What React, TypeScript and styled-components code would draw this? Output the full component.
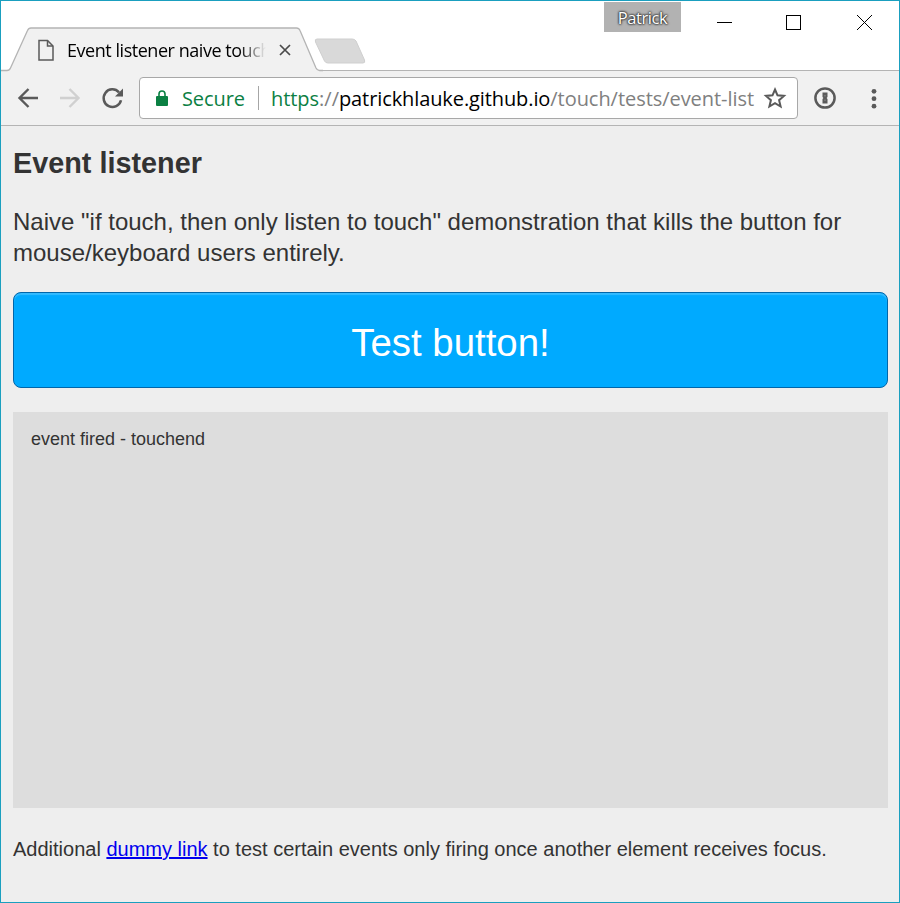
import React from "react";
import styled, { createGlobalStyle } from "styled-components";

const Global = createGlobalStyle`
  *, *::before, *::after { box-sizing: border-box; }
  body { margin: 0; background: #fff; }
`;

const UI_FONT = `"Open Sans", "Noto Sans", sans-serif`;

const Window = styled.div`
  width: 900px;
  height: 903px;
  display: flex;
  flex-direction: column;
  border: 1px solid #1a9fbf;
  background: #eeeeee;
  overflow: hidden;
`;

const TitleBar = styled.header`
  height: 70px;
  flex: none;
  display: flex;
  align-items: flex-start;
  background: #fff;
  border-bottom: 1px solid #b4b4b4;
  font-family: ${UI_FONT};
`;

const Tab = styled.div`
  position: relative;
  width: 313px;
  height: 44px;
  margin-top: 26px;
  padding: 0 26px 0 36px;
  display: flex;
  align-items: center;
  flex: none;
`;

const TabShape = styled.svg`
  position: absolute;
  left: 0;
  top: 0;
  width: 322px;
  height: 45px;
`;

const PageIcon = styled.svg`
  position: relative;
  width: 18px;
  height: 24px;
  margin-top: 1px;
  flex: none;
`;

const TabTitle = styled.span`
  position: relative;
  width: 204px;
  margin: 1px 0 0 12px;
  flex: none;
  white-space: nowrap;
  font-size: 18px;
  line-height: 26px;
  letter-spacing: -0.46px;
  color: #000;
  mask-image: linear-gradient(to right, #000 172px, transparent 199px);
`;

const TabClose = styled.svg`
  position: relative;
  width: 14px;
  height: 14px;
  margin: 1px 0 0 7px;
  flex: none;
`;

const NewTab = styled.svg`
  width: 52px;
  height: 26px;
  margin-top: 37px;
  flex: none;
`;

const Profile = styled.div`
  width: 77px;
  height: 30px;
  margin: 1px 0 0 auto;
  background: #b2b2b2;
  color: #fff;
  font-size: 16.5px;
  line-height: 31px;
  letter-spacing: -0.45px;
  text-align: center;
  text-shadow: 0 0 2px #222, 0 0 2px #222, 0 0 3px #444;
`;

const Controls = styled.div`
  display: flex;
  width: 218px;
  height: 43px;
  padding: 0 26px 0 35px;
  align-items: center;
`;

const ControlIcon = styled.svg<{ $gap?: number }>`
  width: 17px;
  height: 17px;
  margin-right: ${(p) => p.$gap ?? 0}px;
  flex: none;
  shape-rendering: crispEdges;
`;

const Toolbar = styled.nav`
  height: 55px;
  flex: none;
  display: flex;
  align-items: center;
  padding-left: 15px;
  background: #f1f1f1;
  border-bottom: 1px solid #b4b4b4;
  font-family: ${UI_FONT};
`;

const ToolIcon = styled.svg<{ $before?: number; $after?: number }>`
  width: 24px;
  height: 24px;
  margin-left: ${(p) => p.$before ?? 0}px;
  margin-right: ${(p) => p.$after ?? 0}px;
  flex: none;
`;

const Omnibox = styled.div`
  width: 659px;
  height: 42px;
  flex: none;
  display: flex;
  align-items: center;
  padding-left: 15px;
  background: #fff;
  border: 1px solid #a8a8a8;
  border-radius: 4px;
  font-size: 20px;
  line-height: 30px;
  white-space: nowrap;
`;

const Lock = styled.svg`
  width: 14px;
  height: 18px;
  flex: none;
`;

const Secure = styled.span`
  width: 76px;
  margin: 2px 0 0 13px;
  flex: none;
  color: #0b8043;
  letter-spacing: -0.1px;
`;

const Divider = styled.span`
  width: 1px;
  height: 24px;
  flex: none;
  background: #a6a6a6;
  margin-right: 12px;
`;

const Url = styled.span`
  width: 484px;
  margin-top: 2px;
  flex: none;
`;

const UrlPart = styled.span<{ $color: string; $spacing: number }>`
  color: ${(p) => p.$color};
  letter-spacing: ${(p) => p.$spacing}px;
`;

const Star = styled.svg`
  width: 24px;
  height: 24px;
  margin-left: 8px;
  flex: none;
`;

const Page = styled.main`
  flex: 1;
  padding: 20px 11px 0 12px;
  color: #333;
  font-family: "Liberation Sans", Arial, sans-serif;
`;

const Heading = styled.h1`
  margin: 0 0 26px;
  font-size: 28.8px;
  line-height: 34px;
`;

const Intro = styled.p`
  margin: 0 0 24px;
  font-size: 24px;
  line-height: 31px;
`;

const TestButton = styled.button`
  display: block;
  width: 100%;
  height: 96px;
  margin: 0;
  padding: 6px 0 0;
  border: 1px solid #0066aa;
  border-radius: 8px;
  background: #00aaff;
  box-shadow: inset 0 2px 1px rgba(255, 255, 255, 0.2);
  color: #fff;
  font-family: inherit;
  font-size: 38.4px;
  line-height: 44px;
`;

const EventLog = styled.div`
  height: 396px;
  margin-top: 24px;
  padding: 16px 18px;
  background: #dddddd;
  font-size: 18px;
  line-height: 22px;
`;

const Note = styled.p`
  margin: 29px 0 0;
  font-size: 20px;
  line-height: 24px;
`;

const Link = styled.a`
  color: #0000ee;
  text-decoration: underline;
`;

export default function App() {
  return (
    <>
      <Global />
      <Window>
        <TitleBar>
          <Tab>
            <TabShape viewBox="0 0 322 45">
              <path
                d="M0 43.500H6Q8.500 43.500 9.500 41L26.500 3.500Q27.500 1 30 1H295.500Q298 1 299 3.500L315 41Q316.200 43.500 318.500 43.500H322V45H0Z"
                fill="#f1f1f1"
              />
              <path
                d="M0 43.500H6Q8.500 43.500 9.500 41L26.500 3.500Q27.500 1 30 1H295.500Q298 1 299 3.500L315 41Q316.200 43.500 318.500 43.500H322"
                fill="none"
                stroke="#b4b4b4"
                strokeWidth="1.300"
              />
            </TabShape>
            <PageIcon viewBox="0 0 18 24" fill="none" stroke="#5a5a5a" strokeWidth="1.500">
              <path d="M2 2.500H10.500L16 8V22H2Z" />
              <path d="M10.500 2.500V8H16" />
            </PageIcon>
            <TabTitle>Event listener naive touch</TabTitle>
            <TabClose viewBox="0 0 14 14" stroke="#4a4a4a" strokeWidth="1.700">
              <path d="M2 2L12 12M12 2L2 12" />
            </TabClose>
          </Tab>
          <NewTab viewBox="0 0 52 26">
            <path
              d="M3 1H38Q41 1 42 3L50.500 22Q51.500 25 49 25H14Q11.500 25 10.500 23L1.500 4Q0.500 1 3 1Z"
              fill="#d9d9d9"
              stroke="#cfcfcf"
            />
          </NewTab>
          <Profile>Patrick</Profile>
          <Controls>
            <ControlIcon $gap={52} viewBox="0 0 17 17">
              <path d="M1 8.500H16" stroke="#000" />
            </ControlIcon>
            <ControlIcon $gap={54} viewBox="0 0 17 17">
              <rect x="1.500" y="1.500" width="14" height="14" fill="none" stroke="#000" />
            </ControlIcon>
            <ControlIcon viewBox="0 0 17 17">
              <path d="M1 1L16 16M16 1L1 16" stroke="#000" />
            </ControlIcon>
          </Controls>
        </TitleBar>

        <Toolbar>
          <ToolIcon $after={18} viewBox="0 0 24 24" fill="none" stroke="#5a5a5a" strokeWidth="2.400">
            <path d="M22 12H4M12.500 3L3.500 12L12.500 21" />
          </ToolIcon>
          <ToolIcon $after={18} viewBox="0 0 24 24" fill="none" stroke="#d0d0d0" strokeWidth="2.400">
            <path d="M2 12H20M11.500 3L20.500 12L11.500 21" />
          </ToolIcon>
          <ToolIcon $after={15} viewBox="0 0 24 24" fill="none" stroke="#5a5a5a" strokeWidth="2.500">
            <path d="M21 14.200A8.800 8.800 0 1 1 19 6.300" />
            <path d="M23 2.500V10.500H15Z" fill="#5a5a5a" stroke="none" />
          </ToolIcon>
          <Omnibox>
            <Lock viewBox="0 0 14 18">
              <rect x="1" y="7" width="12" height="10" rx="1" fill="#0b8043" />
              <path d="M4 8V5A3 3 0 0 1 10 5V8" fill="none" stroke="#0b8043" strokeWidth="1.600" />
            </Lock>
            <Secure>Secure</Secure>
            <Divider />
            <Url>
              <UrlPart $color="#0b8043" $spacing={-0.05}>https</UrlPart>
              <UrlPart $color="#808080" $spacing={0}>://</UrlPart>
              <UrlPart $color="#000" $spacing={-0.1}>patrickhlauke.github.io</UrlPart>
              <UrlPart $color="#808080" $spacing={-0.05}>/touch/tests/event-list</UrlPart>
            </Url>
            <Star viewBox="0 0 24 24" fill="none" stroke="#5a5a5a" strokeWidth="2">
              <path d="M12 3.500L14.500 9.300L21 9.900L16.100 14.200L17.600 20.500L12 17.100L6.400 20.500L7.900 14.200L3 9.900L9.500 9.300Z" />
            </Star>
          </Omnibox>
          <ToolIcon $before={15} $after={25} viewBox="0 0 24 24" fill="none" stroke="#5a5a5a">
            <circle cx="12" cy="12" r="9.600" strokeWidth="2.500" />
            <path
              d="M9.500 6.500H14.500V11L13.600 12L14.500 13V17.500H9.500V13L10.400 12L9.500 11Z"
              fill="#5a5a5a"
              stroke="none"
            />
            <path d="M12 9V10.500M12 13.500V15" stroke="#999" strokeWidth="0.800" />
          </ToolIcon>
          <ToolIcon viewBox="0 0 24 24" fill="#5a5a5a">
            <circle cx="12" cy="5.300" r="2.400" />
            <circle cx="12" cy="12.700" r="2.400" />
            <circle cx="12" cy="20.200" r="2.400" />
          </ToolIcon>
        </Toolbar>

        <Page>
          <Heading>Event listener</Heading>
          <Intro>
            Naive "if touch, then only listen to touch" demonstration that kills the button for
            mouse/keyboard users entirely.
          </Intro>
          <TestButton>Test button!</TestButton>
          <EventLog>event fired - touchend</EventLog>
          <Note>
            Additional <Link href="#">dummy link</Link> to test certain events only firing once
            another element receives focus.
          </Note>
        </Page>
      </Window>
    </>
  );
}
